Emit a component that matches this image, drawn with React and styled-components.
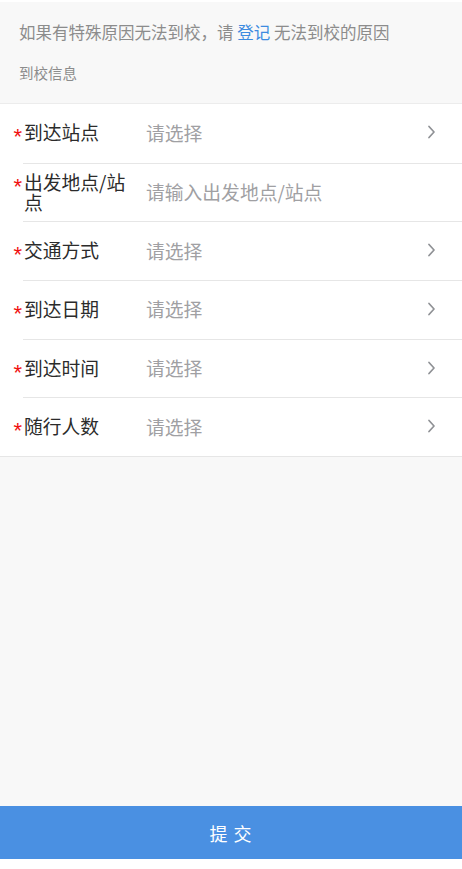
import React from 'react'
import styled, { createGlobalStyle } from 'styled-components'

const fields = [
  { label: '到达站点', placeholder: '请选择', arrow: true },
  { label: '出发地点/站点', placeholder: '请输入出发地点/站点', arrow: false },
  { label: '交通方式', placeholder: '请选择', arrow: true },
  { label: '到达日期', placeholder: '请选择', arrow: true },
  { label: '到达时间', placeholder: '请选择', arrow: true },
  { label: '随行人数', placeholder: '请选择', arrow: true },
]

const Chevron = () => (
  <svg width='10' height='14' viewBox='0 0 10 14'>
    <path
      d='M3 1.5 L8 7 L3 12.5'
      fill='none'
      stroke='#8f9195'
      strokeWidth='1.7'
      strokeLinecap='round'
      strokeLinejoin='round'
    />
  </svg>
)

const App = () => {
  return (
    <Page>
      <GlobalStyle />
      <Main>
        <Notice>
          如果有特殊原因无法到校，请 <Link href='/#'>登记</Link> 无法到校的原因
        </Notice>
        <SectionTitle>到校信息</SectionTitle>
        <Group>
          {fields.map((f, i) => (
            <Row key={f.label}>
              <Body first={i === 0}>
                <Label>
                  <Star>*</Star>
                  {f.label}
                </Label>
                <Value>{f.placeholder}</Value>
                {f.arrow && (
                  <Arrow>
                    <Chevron />
                  </Arrow>
                )}
              </Body>
            </Row>
          ))}
        </Group>
      </Main>
      <Submit>提 交</Submit>
      <Bottom />
    </Page>
  )
}

const GlobalStyle = createGlobalStyle`
  * {
    box-sizing: border-box;
  }
  body {
    margin: 0;
    background: #fff;
    font-family: "Noto Sans CJK SC", "Noto Sans", sans-serif;
  }
`

const Page = styled.div`
  min-height: 869px;
  display: flex;
  flex-direction: column;
  border-top: 2px solid #fff;
`

const Main = styled.div`
  flex: 1;
  background: #f8f8f8;
`

const Notice = styled.p`
  margin: 0;
  padding: 18px 19px 0;
  font-size: 16.5px;
  line-height: 24px;
  color: #8c8c8c;
`

const Link = styled.a`
  color: #3d8be0;
  text-decoration: none;
`

const SectionTitle = styled.h4`
  margin: 0;
  padding: 18px 19px 0;
  height: 60px;
  font-size: 14.5px;
  line-height: 22px;
  font-weight: normal;
  color: #8c8c8c;
  border-bottom: 1px solid #ececec;
`

const Group = styled.div`
  background: #fff;
  border-bottom: 1px solid #e6e6e6;
`

const Row = styled.div`
  padding-left: 23px;
`

const Body = styled.div`
  display: flex;
  align-items: center;
  height: 58.7px;
  padding-right: 26px;
  padding-bottom: 2px;
  border-top: ${(p) => (p.first ? 'none' : '1px solid #e6e6e6')};
`

const Label = styled.div`
  position: relative;
  width: 123px;
  padding-left: 1px;
  padding-right: 10px;
  font-size: 18.8px;
  line-height: 20px;
  color: #2b2b2b;
`

const Star = styled.span`
  position: absolute;
  left: -9.5px;
  top: 5px;
  font-family: "Liberation Sans", sans-serif;
  font-size: 22px;
  line-height: 20px;
  color: #f01010;
`

const Value = styled.div`
  flex: 1;
  font-size: 18.8px;
  color: #a0a0a3;
`

const Arrow = styled.span`
  display: flex;
  align-items: center;
`

const Submit = styled.button`
  height: 53px;
  border: none;
  background: #4a90e2;
  color: #fff;
  font-family: inherit;
  font-size: 18px;
  letter-spacing: 1px;
`

const Bottom = styled.div`
  height: 10px;
  background: #fff;
`

export default App
